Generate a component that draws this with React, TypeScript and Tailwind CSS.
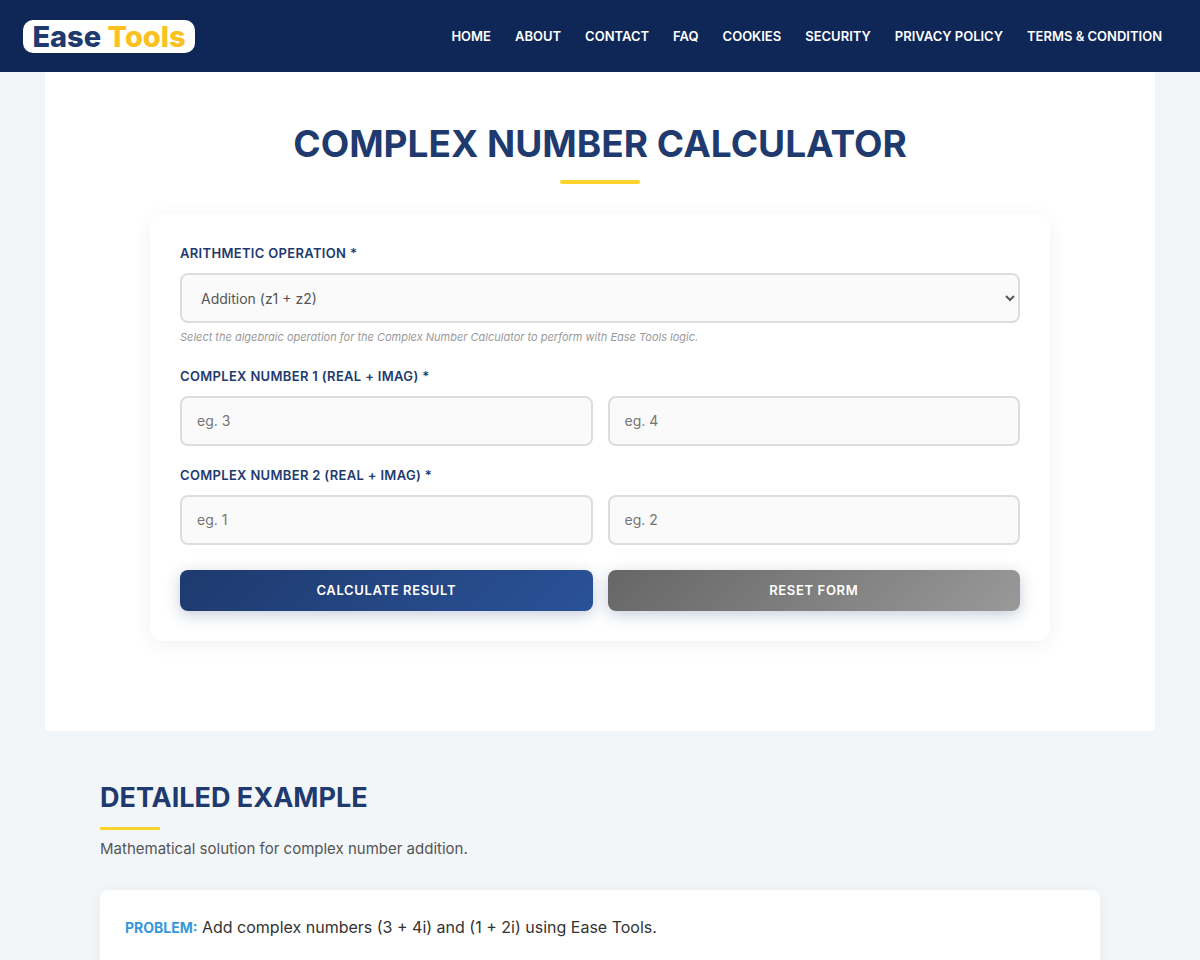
import { useState } from "react"
import type { FormEvent } from "react"

const navLinks = [
  "Home",
  "About",
  "Contact",
  "FAQ",
  "Cookies",
  "Security",
  "Privacy Policy",
  "Terms & Condition",
]

const operations = [
  { value: "add", label: "Addition (z1 + z2)" },
  { value: "sub", label: "Subtraction (z1 - z2)" },
  { value: "mul", label: "Multiplication (z1 × z2)" },
  { value: "div", label: "Division (z1 ÷ z2)" },
]

const labelClass =
  "mb-[10px] block text-[13px] leading-[19px] font-semibold uppercase tracking-wide text-[#1e3a6e]"

const fieldClass =
  "h-[50px] w-full min-w-0 rounded-lg border-2 border-[#dddddd] bg-[#fafafa] px-[15px] pb-0.5 text-sm text-[#555555] placeholder:text-[#757575] outline-none focus:border-[#1e3a6e]"

const buttonClass =
  "h-[41px] cursor-pointer rounded-lg bg-linear-135 text-[13px] font-semibold uppercase tracking-wider text-white shadow-[0_4px_15px_rgba(30,58,110,0.25)]"

function Header() {
  return (
    <header className="flex h-[72px] items-center justify-between bg-[#0f2757] pr-[38px] pl-[23px]">
      <a
        href="#home"
        className="flex h-[33px] w-[172px] items-center justify-center rounded-[10px] bg-white text-[29px] leading-none font-extrabold whitespace-pre text-[#1e3a6e]"
      >
        Ease <span className="text-[#fbc11e]">Tools</span>
      </a>
      <nav className="pb-0.5">
        <ul className="flex gap-6">
          {navLinks.map((link) => (
            <li key={link}>
              <a
                href="#top"
                className="text-[13px] font-semibold whitespace-nowrap text-white uppercase hover:text-[#fdd22a]"
              >
                {link}
              </a>
            </li>
          ))}
        </ul>
      </nav>
    </header>
  )
}

function ComplexField({ index, real, imag }: { index: number; real: string; imag: string }) {
  return (
    <div className="mb-5">
      <label htmlFor={`z${index}-real`} className={labelClass}>
        Complex Number {index} (Real + Imag) *
      </label>
      <div className="grid grid-cols-2 gap-[15px]">
        <input
          id={`z${index}-real`}
          name={`z${index}-real`}
          className={fieldClass}
          inputMode="decimal"
          placeholder={real}
        />
        <input
          name={`z${index}-imag`}
          aria-label={`Complex number ${index} imaginary part`}
          className={fieldClass}
          inputMode="decimal"
          placeholder={imag}
        />
      </div>
    </div>
  )
}

function Calculator() {
  const [operation, setOperation] = useState("add")
  const [result, setResult] = useState("")

  const calculate = (e: FormEvent<HTMLFormElement>) => {
    e.preventDefault()
    const data = new FormData(e.currentTarget)
    const a = Number(data.get("z1-real"))
    const b = Number(data.get("z1-imag"))
    const c = Number(data.get("z2-real"))
    const d = Number(data.get("z2-imag"))

    let re = a + c
    let im = b + d
    if (operation === "sub") {
      re = a - c
      im = b - d
    } else if (operation === "mul") {
      re = a * c - b * d
      im = a * d + b * c
    } else if (operation === "div") {
      const n = c * c + d * d
      re = (a * c + b * d) / n
      im = (b * c - a * d) / n
    }
    setResult(`${re} ${im < 0 ? "-" : "+"} ${Math.abs(im)}i`)
  }

  const reset = () => {
    setOperation("add")
    setResult("")
  }

  return (
    <form
      onSubmit={calculate}
      onReset={reset}
      className="mx-auto mt-[30px] max-w-[900px] rounded-xl bg-white p-[30px] shadow-[0_4px_20px_rgba(0,0,0,0.06)]"
    >
      <div className="mb-5">
        <label htmlFor="operation" className={labelClass}>
          Arithmetic Operation *
        </label>
        <select
          id="operation"
          value={operation}
          onChange={(e) => setOperation(e.target.value)}
          className="h-[50px] w-full rounded-lg border-2 border-[#dddddd] bg-[#fafafa] pl-[15px] text-sm text-[#555555] outline-none focus:border-[#1e3a6e]"
        >
          {operations.map((op) => (
            <option key={op.value} value={op.value}>
              {op.label}
            </option>
          ))}
        </select>
        <p className="mt-1.5 pb-0.5 text-[11px] leading-4 text-[#999999] italic">
          Select the algebraic operation for the Complex Number Calculator to perform with Ease Tools logic.
        </p>
      </div>

      <ComplexField index={1} real="eg. 3" imag="eg. 4" />
      <ComplexField index={2} real="eg. 1" imag="eg. 2" />

      <div className="mt-[25px] grid grid-cols-2 gap-[15px]">
        <button type="submit" className={`${buttonClass} from-[#1e3a6e] to-[#2a5298]`}>
          Calculate Result
        </button>
        <button type="reset" className={`${buttonClass} from-[#666666] to-[#999999]`}>
          Reset Form
        </button>
      </div>

      {result && <p className="mt-5 text-center text-lg font-semibold text-[#1e3a6e]">{result}</p>}
    </form>
  )
}

export default function App() {
  return (
    <div className="min-h-screen bg-[#f2f6f9] font-['Inter',sans-serif] text-[#333333]">
      <Header />

      <main>
        <section className="mx-[45px] rounded-b-[4px] bg-white px-5 pt-12 pb-[90px]">
          <h1 className="text-center text-[37px] leading-[48px] font-bold text-[#1e3a6e] uppercase">
            Complex Number Calculator
          </h1>
          <div className="mx-auto mt-3 h-1 w-20 rounded-sm bg-[#fdd22a]" />
          <Calculator />
        </section>

        <section className="mx-auto max-w-[1000px] pt-12">
          <h2 className="text-[27px] leading-[38px] font-bold text-[#1e3a6e] uppercase">
            Detailed Example
          </h2>
          <div className="mt-[10px] h-[3px] w-[60px] bg-[#fdd22a]" />
          <p className="mt-2 text-[15px] leading-[22px] text-[#555555]">
            Mathematical solution for complex number addition.
          </p>

          <article className="mt-[30px] rounded-lg bg-white px-[25px] pt-6 pb-10 shadow-[0_2px_15px_rgba(0,0,0,0.05)]">
            <p className="text-base leading-[26px]">
              <strong className="text-sm font-bold text-[#3498db] uppercase">Problem:</strong> Add complex
              numbers (3 + 4i) and (1 + 2i) using Ease Tools.
            </p>
          </article>
        </section>
      </main>
    </div>
  )
}
